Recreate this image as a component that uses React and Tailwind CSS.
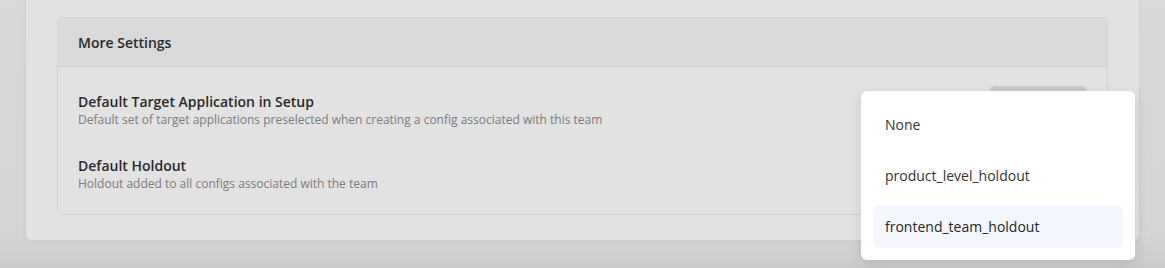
export default function App() {
  return (
    <div
      className="relative w-[1165px] h-[268px] overflow-hidden bg-[linear-gradient(to_bottom,#d7d9da_0%,#d4d5d6_88%,#c9cacb_100%)]"
      style={{ fontFamily: '"Open Sans", "Noto Sans", sans-serif' }}
    >
      <div className="mx-[26px] bg-[#e2e2e2] rounded-b-[6px] px-[31px] pt-[17px] pb-[25px] shadow-[0_0_6px_rgba(0,0,0,0.06)]">
        <div className="border border-[#d2d2d2] rounded-[5px] overflow-hidden">
          <div className="h-[49px] bg-[#d9d9d9] border-b border-[#d2d2d2] flex items-center px-[20px]">
            <span className="text-[14px] font-semibold text-[#2b2b2b]">More Settings</span>
          </div>
          <div className="px-[20px] pt-[25px] pb-[22px] flex flex-col gap-[28px]">
            <div className="flex items-start justify-between">
              <div className="flex flex-col">
                <span className="text-[14px] leading-[19px] font-semibold text-[#2a2a2a]">
                  Default Target Application in Setup
                </span>
                <span className="text-[12px] leading-[17px] text-[#7b7b7b]">
                  Default set of target applications preselected when creating a config associated with this team
                </span>
              </div>
              <div className="mt-[-6px] w-[98px] h-[36px] rounded-[6px] bg-[#c9c9c9]" />
            </div>
            <div className="flex flex-col">
              <span className="text-[14px] leading-[19px] font-semibold text-[#2a2a2a]">Default Holdout</span>
              <span className="text-[12px] leading-[17px] text-[#7b7b7b]">
                Holdout added to all configs associated with the team
              </span>
            </div>
          </div>
        </div>
      </div>

      <div className="absolute left-[861px] top-[91px] w-[274px] h-[169px] bg-white rounded-[6px] shadow-[0_4px_14px_rgba(0,0,0,0.10)] p-[12px] flex flex-col gap-[8px]">
        <div className="h-[43px] flex items-center px-[12px] rounded-[6px] text-[14px] text-[#333333]">None</div>
        <div className="h-[43px] flex items-center px-[12px] rounded-[6px] text-[14px] text-[#333333]">
          product_level_holdout
        </div>
        <div className="h-[43px] flex items-center px-[12px] rounded-[6px] bg-[#f3f7fd] text-[14px] font-medium text-[#262626]">
          frontend_team_holdout
        </div>
      </div>
    </div>
  );
}
